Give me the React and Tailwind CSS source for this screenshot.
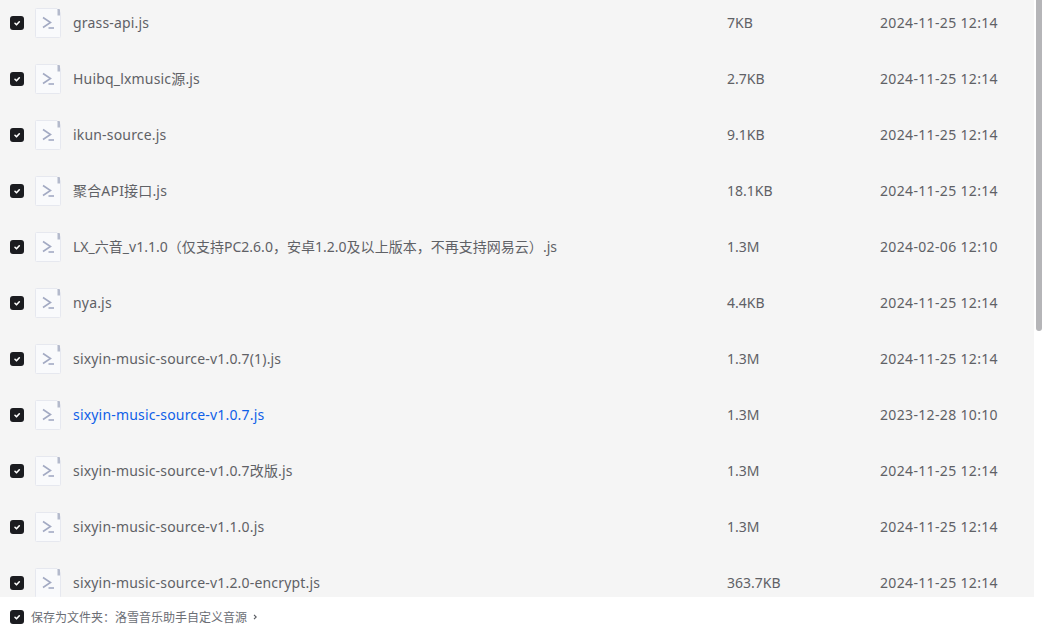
const rows = [
  ["grass-api.js", "7KB", "2024-11-25 12:14"],
  ["Huibq_lxmusic源.js", "2.7KB", "2024-11-25 12:14"],
  ["ikun-source.js", "9.1KB", "2024-11-25 12:14"],
  ["聚合API接口.js", "18.1KB", "2024-11-25 12:14"],
  ["LX_六音_v1.1.0（仅支持PC2.6.0，安卓1.2.0及以上版本，不再支持网易云）.js", "1.3M", "2024-02-06 12:10"],
  ["nya.js", "4.4KB", "2024-11-25 12:14"],
  ["sixyin-music-source-v1.0.7(1).js", "1.3M", "2024-11-25 12:14"],
  ["sixyin-music-source-v1.0.7.js", "1.3M", "2023-12-28 10:10", true],
  ["sixyin-music-source-v1.0.7改版.js", "1.3M", "2024-11-25 12:14"],
  ["sixyin-music-source-v1.1.0.js", "1.3M", "2024-11-25 12:14"],
  ["sixyin-music-source-v1.2.0-encrypt.js", "363.7KB", "2024-11-25 12:14"],
];

function Check() {
  return (
    <span className="flex h-[14px] w-[14px] shrink-0 items-center justify-center rounded-[3px] bg-[#1b1c20]">
      <svg width="10" height="10" viewBox="0 0 10 10" fill="none">
        <path d="M3 5.3 4.5 6.8 7.3 3.8" stroke="#fff" strokeWidth="1.6" strokeLinecap="round" strokeLinejoin="round" />
      </svg>
    </span>
  );
}

function FileIcon() {
  return (
    <svg width="26" height="30" viewBox="0 0 26 30" fill="none" className="block">
      <path d="M0.5 1.5a1 1 0 0 1 1-1H22l3.5 4v24a1 1 0 0 1-1 1H1.5a1 1 0 0 1-1-1z" fill="#f9fafc" stroke="#e6e8ef" />
      <path d="M22.5 1h1.5a1 1 0 0 1 1 1v5.5h-2.5z" fill="#b4bacc" />
      <path d="M8 9.5 15.5 14.5 8 19.5" stroke="#a3aac3" strokeWidth="1.6" fill="none" />
      <path d="M13.5 20h5.5" stroke="#a3aac3" strokeWidth="1.6" />
    </svg>
  );
}

export default function App() {
  return (
    <div className="relative flex h-[633px] w-[1044px] flex-col overflow-hidden bg-white font-['Noto_Sans','Noto_Sans_CJK_SC',sans-serif] text-[14px] text-[#5f6166]">
      <div className="h-[597px] w-[1034px] overflow-hidden bg-[#f5f5f5]">
        <div className="-mt-[6px]">
          {rows.map(([name, size, date, active]) => (
            <div key={name} className="flex h-[56px] items-center pl-[10px]">
              <span className="mt-[2px]"><Check /></span>
              <span className="ml-[11px] mt-[2px]"><FileIcon /></span>
              <span className={`ml-[12px] w-[654px] truncate ${name.startsWith("LX") ? "tracking-[0.02px]" : "tracking-[0.18px]"} ${active ? "text-[#0f5fe8]" : ""}`}>{name}</span>
              <span className="w-[153px]">{size}</span>
              <span className="tracking-[0.34px]">{date}</span>
            </div>
          ))}
        </div>
      </div>
      <div className="flex h-[36px] items-center pl-[10px] pt-[4px]">
        <Check />
        <span className="ml-[7px] mt-[2px] text-[12px] text-[#6b6e75]">保存为文件夹：洛雪音乐助手自定义音源</span>
        <svg width="6" height="8" viewBox="0 0 6 8" fill="none" className="ml-[5px]">
          <path d="M2 1.8 4.2 4 2 6.2" stroke="#55585e" strokeWidth="1.1" />
        </svg>
      </div>
      <div className="absolute right-[2px] top-0 h-[331px] w-[6px] rounded-b-[3px] bg-[#b5b5b8]" />
    </div>
  );
}
